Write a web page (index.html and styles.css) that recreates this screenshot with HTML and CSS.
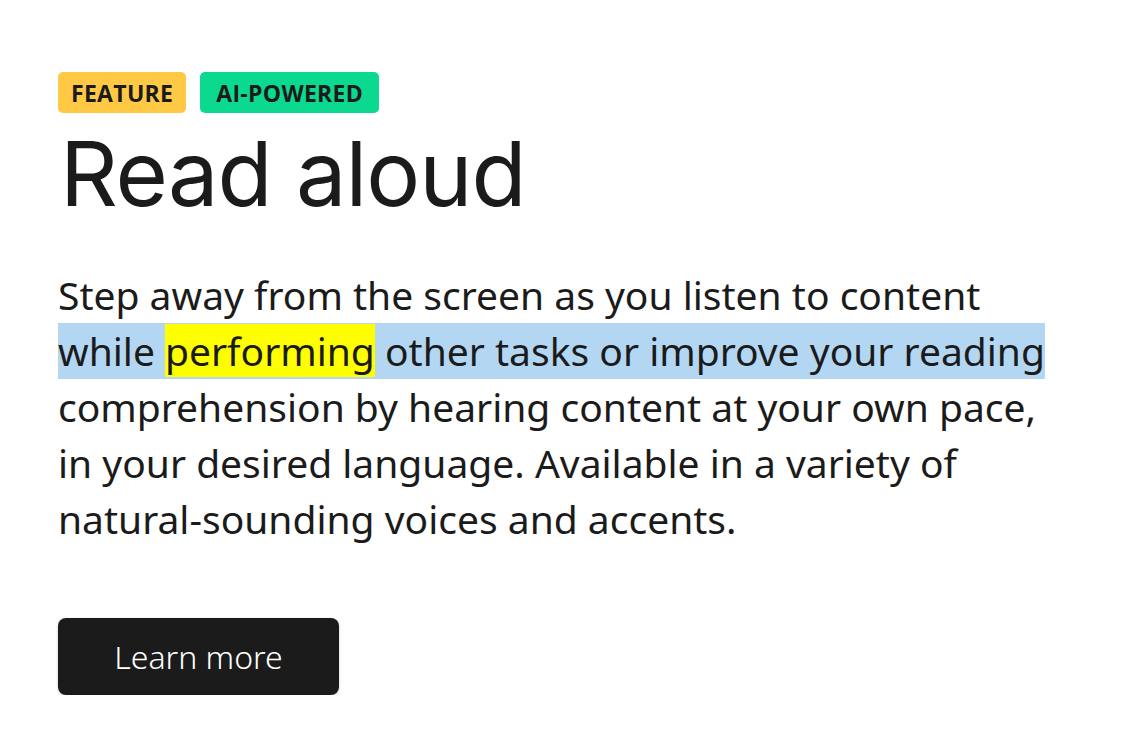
FILE: index.html
```html
<!DOCTYPE html>
<html lang="en">
<head>
<meta charset="utf-8">
<title>Read aloud</title>
<link rel="stylesheet" href="styles.css">
</head>
<body>
<section class="feature">
  <div class="badges">
    <span class="badge badge-feature">FEATURE</span>
    <span class="badge badge-ai">AI-POWERED</span>
  </div>
  <h1 class="title">Read aloud</h1>
  <p class="desc">
    <span class="line">Step away from the screen as you listen to content</span>
    <span class="line line-current">while <mark class="word-current">performing</mark> other tasks or improve your reading</span>
    <span class="line">comprehension by hearing content at your own pace,</span>
    <span class="line">in your desired language. Available in a variety of</span>
    <span class="line">natural-sounding voices and accents.</span>
  </p>
  <a class="btn" href="#">Learn more</a>
</section>
</body>
</html>
```
FILE: styles.css
```css
html, body {
  margin: 0;
  padding: 0;
  background: #ffffff;
}
body {
  color: #1b1b1b;
  font-family: "Noto Sans", "Open Sans", sans-serif;
}
.feature {
  padding: 72px 0 0 58px;
  display: flex;
  flex-direction: column;
  align-items: flex-start;
}
.badges {
  display: flex;
  gap: 14px;
}
.badge {
  display: inline-flex;
  align-items: center;
  height: 41px;
  padding: 0 13px;
  border-radius: 5px;
  font-family: "Open Sans", sans-serif;
  font-weight: 700;
  font-size: 23px;
  letter-spacing: 0.3px;
  color: #1b1b1b;
}
.badge-feature { background: #ffc845; }
.badge-ai {
  background: #0ad98f;
  padding: 0 16px;
}
.title {
  margin: 11px 0 0 2px;
  font-family: "Inter", sans-serif;
  font-weight: 400;
  font-size: 90px;
  line-height: 100px;
  letter-spacing: -1px;
  color: #1b1b1b;
}
.desc {
  margin: 43px 0 0 0;
  font-size: 39px;
  line-height: 56px;
}
.line {
  display: block;
  width: fit-content;
}
.line-current {
  background: #b3d7f3;
}
.word-current {
  background: #ffff00;
  color: inherit;
}
.btn {
  margin-top: 71px;
  display: inline-flex;
  align-items: center;
  justify-content: center;
  width: 281px;
  height: 77px;
  box-sizing: border-box;
  border-radius: 8px;
  background: #1b1b1b;
  color: #ffffff;
  text-decoration: none;
  font-size: 32px;
  font-weight: 300;
  box-shadow: 0 1px 3px rgba(0,0,0,0.2);
}
```
